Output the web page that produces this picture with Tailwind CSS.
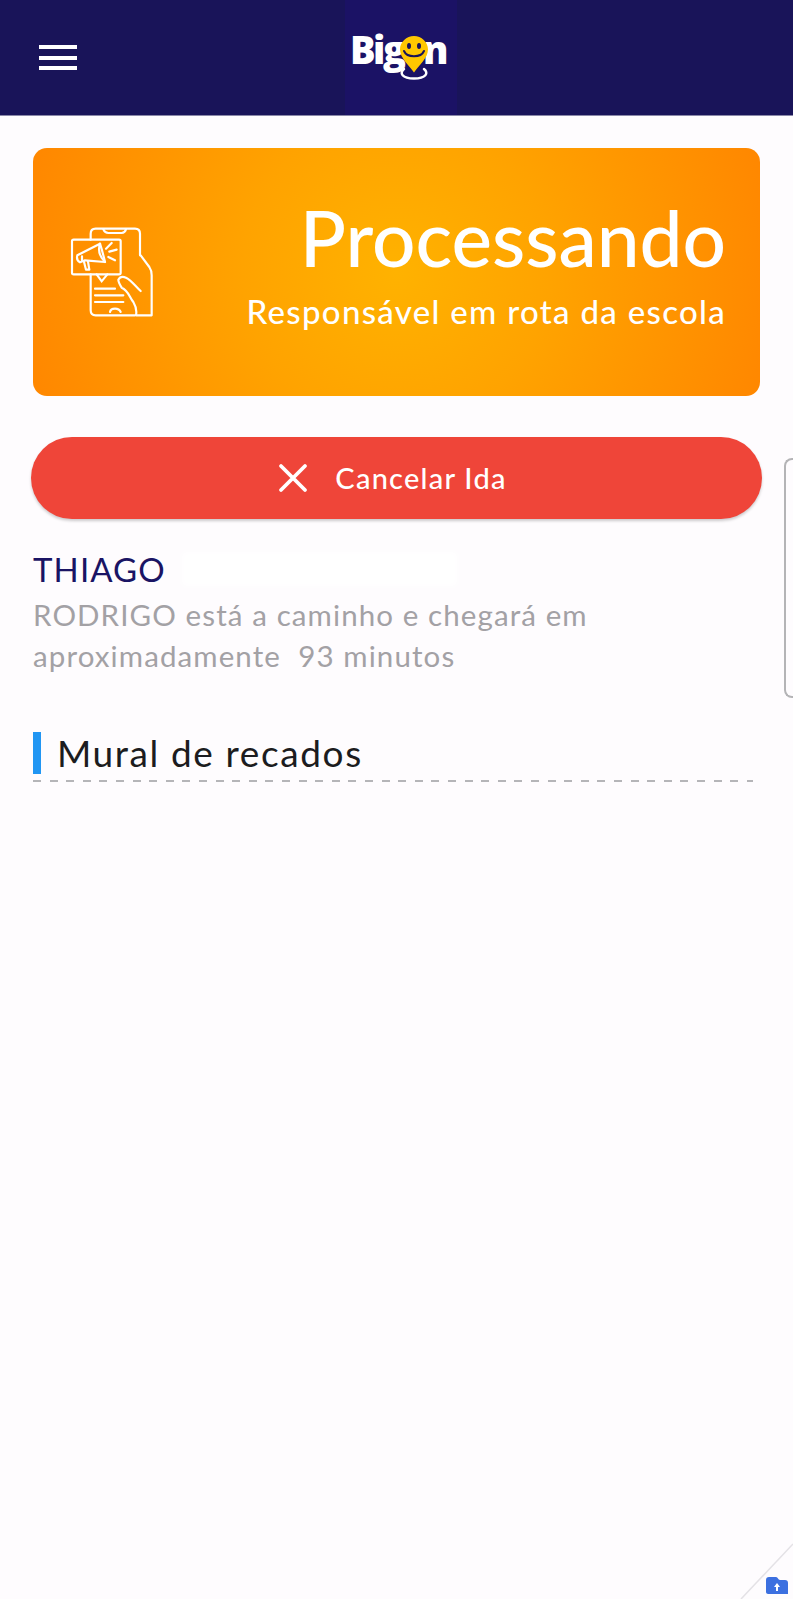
<!DOCTYPE html>
<html lang="pt">
  <head>
    <meta charset="UTF-8" />
    <meta name="viewport" content="width=device-width, initial-scale=1.0" />
    <title>Bigon</title>
    <script src="https://cdn.jsdelivr.net/npm/@tailwindcss/browser@4"></script>
  </head>
  <body class="relative h-[1599px] w-[793px] overflow-hidden bg-[#fefcfe] font-['Lato',sans-serif]">
    <!-- Header -->
    <header class="relative flex h-[116px] items-center justify-center border-b border-b-[#8a88a8] bg-[#191459]">
      <button class="absolute left-[39px] top-[45px] flex w-[38px] flex-col gap-[6.5px]">
        <span class="h-[4px] bg-white"></span>
        <span class="h-[4px] bg-white"></span>
        <span class="h-[4px] bg-white"></span>
      </button>
      <div class="relative ml-[9px] flex h-full w-[112px] items-start justify-center bg-[#1b1265]">
        <div class="relative mt-[33px] h-[48px] w-[96px]">
          <span class="absolute left-[-3px] top-[-4px] font-['Open_Sans',sans-serif] text-[38px] leading-[40px] font-extrabold tracking-[-2.5px] text-white">Big</span>
          <span class="absolute left-[70px] top-[-4px] font-['Open_Sans',sans-serif] text-[38px] leading-[40px] font-extrabold text-white">n</span>
          <svg class="absolute left-[43.500px] top-[3px]" width="34" height="44" viewBox="0 0 34 44">
            <path d="M7 33C2 37 5 42.500 17 42.500S32 37 27 33" fill="none" stroke="white" stroke-width="2.500" stroke-linecap="round" />
            <path d="M17 36.500C12 29 3 22 3 13.500C3 6 9.500 0 17 0S31 6 31 13.500C31 22 22 29 17 36.500Z" fill="#ffc800" />
            <ellipse cx="12" cy="10" rx="2" ry="3" fill="#191459" />
            <ellipse cx="22" cy="10" rx="2" ry="3" fill="#191459" />
            <path d="M7 15C10 22 24 22 27 15" fill="none" stroke="#191459" stroke-width="2" stroke-linecap="round" />
          </svg>
        </div>
      </div>
    </header>

    <main class="flex flex-col px-[33px] pt-[32px]">
      <!-- Status card -->
      <section class="flex h-[248px] w-[727px] items-center justify-between rounded-[14px] bg-[radial-gradient(circle_closest-corner_at_center,#ffb200_0%,#ffa300_40%,#ff8700_100%)] pr-[34px] pl-[37px]">
        <svg width="84" height="90" viewBox="60 80 252 270" fill="none" stroke="white" stroke-width="6.500" stroke-linejoin="round" stroke-linecap="round">
          <path d="M122 118V100Q122 85 137 85H255Q270 85 270 100V165" />
          <path d="M160 87Q165 98 175 98H215Q225 98 228 87" />
          <path d="M122 222V330Q122 345 137 345H255" />
          <path d="M272 165L298 200Q305 210 305 225V345H258Q262 325 250 305C238 290 235 270 215 262Q205 245 205 238Q212 225 228 232C245 240 258 260 272 272" />
          <rect x="66" y="118" width="146" height="104" rx="5" />
          <path d="M140 222L155 243L172 222" stroke-linejoin="miter" />
          <path d="M135 265H195M135 285H220M135 305H220" />
          <path d="M180 335Q182 325 195 325Q208 325 212 335" />
          <path d="M150 130Q158 155 165 185L105 180L90 186Q78 180 82 165Z" />
          <path d="M96 168V180M150 130Q140 160 165 185" />
          <path d="M102 184L108 208H118L114 184" />
          <path d="M168 145L185 128M178 154L200 148M175 170L195 180" />
        </svg>
        <div class="mb-[22px] flex flex-col items-end text-white">
          <h1 class="text-[76.500px] leading-[88px] font-medium">Processando</h1>
          <p class="mt-[11px] text-[33px] leading-[38px] font-medium tracking-[1.300px]">Responsável em rota da escola</p>
        </div>
      </section>

      <!-- Cancel button -->
      <button class="mt-[41px] -ml-[2px] flex h-[82px] w-[731px] items-center justify-center gap-[27px] rounded-full bg-[#ef4539] pr-[8px] text-[29px] font-medium tracking-[1.250px] text-white shadow-[0_2px_3px_rgba(0,0,0,0.2)]">
        <svg width="30" height="30" viewBox="0 0 30 30" fill="none" stroke="white" stroke-width="3.800" stroke-linecap="round"><path d="M3 3L27 27M27 3L3 27" /></svg>
        <span>Cancelar Ida</span>
      </button>

      <!-- Info -->
      <div class="mt-[30px] flex items-center gap-[16px]">
        <p class="text-[33px] leading-[40px] tracking-[1.100px] text-[#1a1464]">THIAGO</p>
        <span class="h-[34px] w-[275px] bg-white blur-[3px]"></span>
      </div>
      <p class="mt-[5px] w-[640px] text-[29.500px] leading-[41px] tracking-[1.100px] text-[#a3a1a5]">RODRIGO está a caminho e chegará em aproximadamente&nbsp; 93 minutos</p>

      <!-- Mural -->
      <div class="mt-[56px] flex h-[42px] items-center gap-[16px]">
        <span class="h-full w-[8px] bg-[#2196f3]"></span>
        <h2 class="text-[37px] leading-[42px] font-normal tracking-[1.600px] text-[#1c1c20]">Mural de recados</h2>
      </div>
      <div class="mt-[6px] h-[2px] w-[720px] bg-[repeating-linear-gradient(90deg,#b5b5b8_0,#b5b5b8_8px,transparent_8px,transparent_16.600px)]"></div>
    </main>

    <!-- Side handle -->
    <div class="absolute top-[458px] left-[784px] h-[240px] w-[20px] rounded-l-[8px] border-2 border-r-0 border-[#b4b4b6]"></div>

    <!-- Corner fold and folder -->
    <svg class="absolute right-0 bottom-0" width="73" height="69" viewBox="0 0 73 69">
      <path d="M21 69L73 14" stroke="#e4e2e6" stroke-width="1.500" fill="none" />
      <path d="M46 50C46 48 47 47 49 47H56C58 47 58 50 60 50H65C67 50 68 51 68 53V64H48C47 64 46 63 46 62Z" fill="#3c70e0" />
      <path d="M57 53L60 57H58V61H56V57H54Z" fill="white" />
    </svg>
  </body>
</html>
